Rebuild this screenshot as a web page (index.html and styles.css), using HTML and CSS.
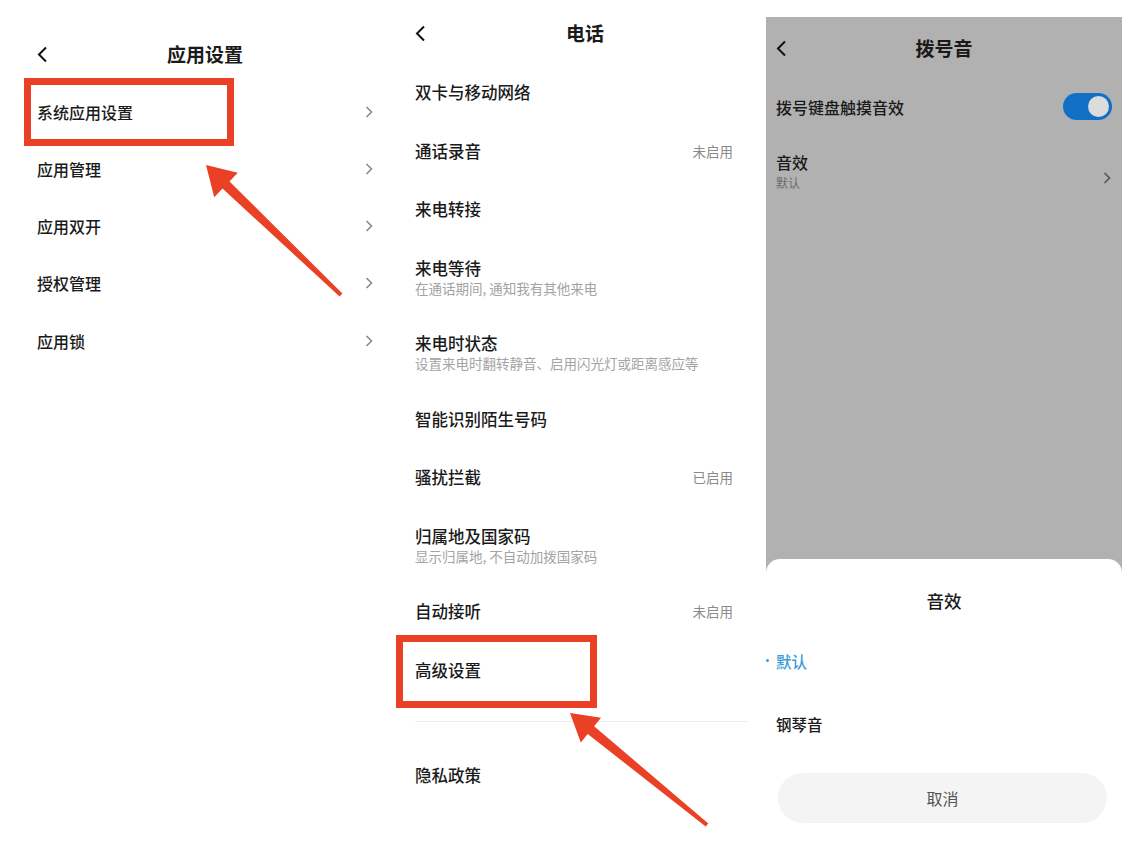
FILE: index.html
```html
<!DOCTYPE html>
<html lang="zh-CN">

<head>
    <meta charset="UTF-8">
    <meta name="viewport" content="width=device-width, initial-scale=1.0">
    <title>拨号音设置</title>
    <link rel="stylesheet" href="styles.css">
</head>

<body>

    <div class="page">

        <!-- 应用设置 -->
        <div class="screen screen-left">
            <div class="header">
                <svg class="back" width="11" height="17" viewBox="0 0 11 17"><path d="M9 1.5L2 8.5l7 7" /></svg>
                <h2>应用设置</h2>
                <span></span>
            </div>
            <ul class="list">
                <li class="row">系统应用设置<svg class="chev" width="8" height="12" viewBox="0 0 8 12"><path d="M1.5 1l5 5-5 5" /></svg></li>
                <li class="row">应用管理<svg class="chev" width="8" height="12" viewBox="0 0 8 12"><path d="M1.5 1l5 5-5 5" /></svg></li>
                <li class="row">应用双开<svg class="chev" width="8" height="12" viewBox="0 0 8 12"><path d="M1.5 1l5 5-5 5" /></svg></li>
                <li class="row">授权管理<svg class="chev" width="8" height="12" viewBox="0 0 8 12"><path d="M1.5 1l5 5-5 5" /></svg></li>
                <li class="row">应用锁<svg class="chev" width="8" height="12" viewBox="0 0 8 12"><path d="M1.5 1l5 5-5 5" /></svg></li>
            </ul>
            <div class="mark mark-left"></div>
        </div>

        <!-- 电话 -->
        <div class="screen screen-mid">
            <div class="header">
                <svg class="back" width="11" height="17" viewBox="0 0 11 17"><path d="M9 1.5L2 8.5l7 7" /></svg>
                <h2>电话</h2>
                <span></span>
            </div>
            <ul class="list">
                <li class="item"><span class="title">双卡与移动网络</span></li>
                <li class="item"><span class="title">通话录音</span><span class="value">未启用</span></li>
                <li class="item"><span class="title">来电转接</span></li>
                <li class="item two"><span class="title">来电等待</span><span class="sub">在通话期间, 通知我有其他来电</span></li>
                <li class="item two"><span class="title">来电时状态</span><span class="sub">设置来电时翻转静音、启用闪光灯或距离感应等</span></li>
                <li class="item"><span class="title">智能识别陌生号码</span></li>
                <li class="item"><span class="title">骚扰拦截</span><span class="value">已启用</span></li>
                <li class="item two"><span class="title">归属地及国家码</span><span class="sub">显示归属地, 不自动加拨国家码</span></li>
                <li class="item"><span class="title">自动接听</span><span class="value">未启用</span></li>
                <li class="item"><span class="title">高级设置</span></li>
            </ul>
            <div class="divider"></div>
            <ul class="list">
                <li class="item"><span class="title">隐私政策</span></li>
            </ul>
            <div class="mark mark-mid"></div>
        </div>

        <!-- 拨号音 -->
        <div class="screen screen-right">
            <div class="dim">
                <div class="header">
                    <svg class="back" width="11" height="17" viewBox="0 0 11 17"><path d="M9 1.5L2 8.5l7 7" /></svg>
                    <h2>拨号音</h2>
                    <span></span>
                </div>
                <div class="opt">
                    <span class="title">拨号键盘触摸音效</span>
                    <span class="switch"><span class="knob"></span></span>
                </div>
                <div class="opt opt-two">
                    <div class="texts">
                        <span class="title">音效</span>
                        <span class="sub">默认</span>
                    </div>
                    <svg class="chev" width="8" height="12" viewBox="0 0 8 12"><path d="M1.5 1l5 5-5 5" /></svg>
                </div>
            </div>
            <div class="sheet">
                <h3>音效</h3>
                <div class="choice active">默认</div>
                <div class="choice">钢琴音</div>
                <button class="cancel">取消</button>
            </div>
        </div>

        <!-- 标注箭头 -->
        <svg class="arrows" width="1140" height="866" viewBox="0 0 1140 866">
            <polygon points="206,165 237.8,172.8 229.5,181.4 342.4,293.6 339.6,296.4 222.5,188.6 214.2,197.2" />
            <polygon points="570,713 601,717.7 594.1,726.2 708.3,823.5 705.7,826.5 587.7,734 580.8,742.5" />
        </svg>

    </div>

</body>

</html>
```

FILE: styles.css
```css
* {
    box-sizing: border-box;
}

body {
    margin: 0;
    background-color: #fff;
    font-family: "Noto Sans CJK SC", "Noto Sans", sans-serif;
    color: #1a1a1a;
}

ul {
    list-style: none;
    margin: 0;
    padding: 0;
}

.page {
    position: relative;
    display: flex;
    width: 1140px;
    height: 866px;
    overflow: hidden;
}

.screen {
    position: relative;
    flex-shrink: 0;
}

.header {
    display: grid;
    grid-template-columns: 24px 1fr 24px;
    align-items: center;
    height: 44px;
}

.header h2 {
    margin: 0;
    text-align: center;
    font-size: 19px;
    font-weight: 700;
    line-height: 24px;
}

.back path {
    fill: none;
    stroke: #111;
    stroke-width: 2;
}

.chev path {
    fill: none;
    stroke: #8a8a8a;
    stroke-width: 1.6;
}

/* 左边 */
.screen-left {
    width: 385px;
    padding: 32px 12px 0 37px;
}

.screen-left .list {
    margin-top: 7px;
}

.row {
    display: flex;
    justify-content: space-between;
    align-items: center;
    height: 57.25px;
    font-size: 16px;
    font-weight: 500;
}

/* 中间 */
.screen-mid {
    width: 380px;
    padding: 11px 10px 0 30px;
}

.screen-mid .header {
    margin-bottom: 7.75px;
}

.item {
    display: flex;
    flex-wrap: wrap;
    justify-content: space-between;
    align-items: center;
    padding: 18.25px 22px 18.25px 0;
}

.item .title {
    font-size: 16.5px;
    font-weight: 500;
    line-height: 22px;
}

.item .value {
    font-size: 13.5px;
    color: #8a8a8a;
    line-height: 22px;
}

.item.two {
    padding-bottom: 17.25px;
}

.item .sub {
    width: 100%;
    font-size: 13.5px;
    color: #a3a3a3;
    line-height: 18px;
}

.divider {
    height: 1px;
    margin: 22px 7px 24px 0;
    background-color: #ececec;
}

/* 标注框 */
.mark {
    position: absolute;
    border: 7px solid #ea4026;
}

.mark-left {
    left: 24px;
    top: 78px;
    width: 210px;
    height: 68px;
}

.mark-mid {
    left: 11px;
    top: 635px;
    width: 201px;
    height: 73px;
}

.arrows {
    position: absolute;
    left: 0;
    top: 0;
    pointer-events: none;
}

.arrows polygon {
    fill: #ea4026;
}

/* 右边 */
.screen-right {
    display: flex;
    flex-direction: column;
    width: 356px;
    margin: 17px 0 0 1px;
    background-color: #b1b1b1;
}

.dim {
    height: 542px;
    padding: 9px 10px 0 10px;
}

.dim .header {
    margin-bottom: 7.5px;
}

.opt {
    display: flex;
    justify-content: space-between;
    align-items: center;
    height: 58px;
}

.opt .title {
    font-size: 16px;
    font-weight: 500;
    line-height: 22px;
}

.opt-two {
    align-items: flex-start;
    height: auto;
    padding-top: 15px;
}

.opt-two .chev {
    margin: 21px 1px 0 0;
}

.opt-two .chev path {
    stroke: #555;
}

.texts {
    display: flex;
    flex-direction: column;
}

.texts .sub {
    font-size: 12px;
    line-height: 20px;
    color: #6d6d6d;
}

.switch {
    display: flex;
    justify-content: flex-end;
    align-items: center;
    width: 49px;
    height: 27px;
    padding-right: 3px;
    border-radius: 14px;
    background-color: #1170c6;
}

.knob {
    width: 21px;
    height: 21px;
    border-radius: 50%;
    background-color: #dcdcdc;
}

.sheet {
    flex: 1;
    padding: 30px 10px 0 10px;
    background-color: #fff;
    border-radius: 14px 14px 0 0;
}

.sheet h3 {
    margin: 0 0 17px;
    text-align: center;
    font-size: 17.5px;
    font-weight: 500;
    line-height: 23px;
}

.choice {
    display: flex;
    align-items: center;
    height: 63px;
    font-size: 15.5px;
    font-weight: 500;
}

.choice.active {
    position: relative;
    color: #3b9bd6;
}

.choice.active::before {
    content: "";
    position: absolute;
    left: -10px;
    top: 30px;
    width: 3px;
    height: 3px;
    border-radius: 50%;
    background-color: #3b9bd6;
}

.cancel {
    display: block;
    width: 329px;
    height: 50px;
    margin: 18px 0 0 2px;
    border: none;
    border-radius: 25px;
    background-color: #f4f4f4;
    font-family: inherit;
    font-size: 16px;
    color: #555;
}
```
